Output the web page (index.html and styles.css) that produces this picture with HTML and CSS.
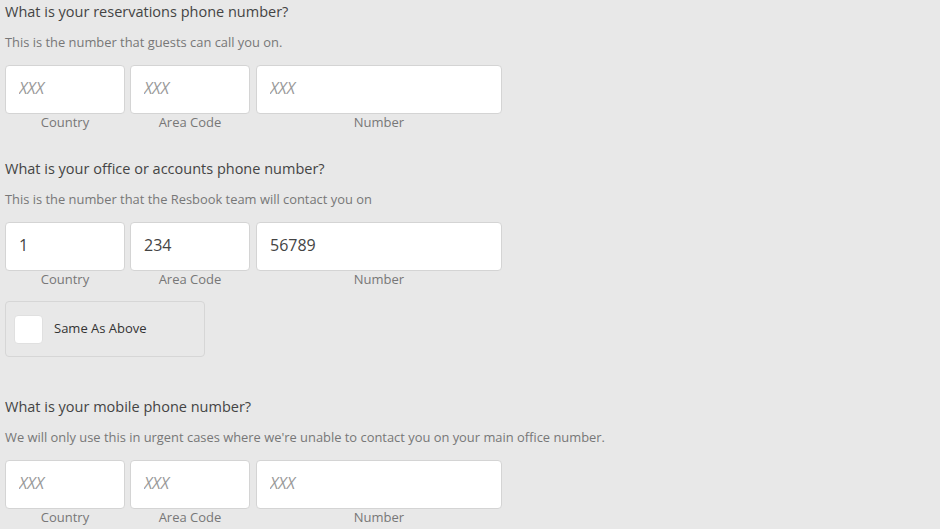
FILE: index.html
```html
<!DOCTYPE html>
<html lang="en">
<head>
  <meta charset="UTF-8" />
  <meta name="viewport" content="width=device-width, initial-scale=1" />
  <title>Phone Numbers</title>
  <link rel="stylesheet" href="styles.css">
</head>
<body>

  <div class="section">
    <h3>What is your reservations phone number?</h3>
    <p class="hint">This is the number that guests can call you on.</p>
    <div class="phone-row">
      <div class="field small">
        <input type="text" placeholder="XXX" />
        <span>Country</span>
      </div>
      <div class="field small">
        <input type="text" placeholder="XXX" />
        <span>Area Code</span>
      </div>
      <div class="field wide">
        <input type="text" placeholder="XXX" />
        <span>Number</span>
      </div>
    </div>
  </div>

  <div class="section">
    <h3>What is your office or accounts phone number?</h3>
    <p class="hint">This is the number that the Resbook team will contact you on</p>
    <div class="phone-row">
      <div class="field small">
        <input type="text" placeholder="XXX" value="1" />
        <span>Country</span>
      </div>
      <div class="field small">
        <input type="text" placeholder="XXX" value="234" />
        <span>Area Code</span>
      </div>
      <div class="field wide">
        <input type="text" placeholder="XXX" value="56789" />
        <span>Number</span>
      </div>
    </div>
    <label class="same-box">
      <span class="check"></span>
      <span class="same-text">Same As Above</span>
    </label>
  </div>

  <div class="section">
    <h3>What is your mobile phone number?</h3>
    <p class="hint">We will only use this in urgent cases where we're unable to contact you on your main office number.</p>
    <div class="phone-row">
      <div class="field small">
        <input type="text" placeholder="XXX" />
        <span>Country</span>
      </div>
      <div class="field small">
        <input type="text" placeholder="XXX" />
        <span>Area Code</span>
      </div>
      <div class="field wide">
        <input type="text" placeholder="XXX" />
        <span>Number</span>
      </div>
    </div>
  </div>

</body>
</html>
```

FILE: styles.css
```css
body {
  font-family: "Open Sans", sans-serif;
  margin: 0;
  padding: 0 5px;
  background: #e8e8e8;
  color: #444;
}
.section {
  display: flex;
  flex-direction: column;
  align-items: flex-start;
  margin-bottom: 27px;
}
h3 {
  font-size: 14.5px;
  font-weight: normal;
  line-height: 24px;
  margin: 0;
  color: #444;
}
.hint {
  font-size: 12.9px;
  line-height: 24px;
  margin: 6px 0 11px;
  color: #777;
}
.phone-row {
  display: flex;
  gap: 5px;
}
.field {
  display: flex;
  flex-direction: column;
}
.field.small {
  width: 120px;
}
.field.wide {
  width: 246px;
  margin-left: 1px;
}
.field input {
  box-sizing: border-box;
  width: 100%;
  height: 49px;
  border: 1px solid #d4d4d4;
  border-radius: 4px;
  background: #fff;
  padding: 0 13px 3px;
  font-family: inherit;
  font-size: 16px;
  color: #444;
  outline: none;
}
.field input::placeholder {
  font-style: italic;
  color: #999;
}
.field span {
  text-align: center;
  font-size: 13px;
  line-height: 16px;
  color: #777;
}
.same-box {
  display: flex;
  align-items: center;
  gap: 11px;
  box-sizing: border-box;
  width: 200px;
  height: 56px;
  margin-top: 14px;
  margin-bottom: 11px;
  padding: 0 8px;
  border: 1px solid #d6d6d6;
  border-radius: 4px;
  font-size: 13px;
  color: #333;
}
.same-text {
  margin-top: -3px;
}
.check {
  width: 29px;
  height: 29px;
  background: #fff;
  border-radius: 4px;
  border: 1px solid #e0e0e0;
  box-sizing: border-box;
}
```
